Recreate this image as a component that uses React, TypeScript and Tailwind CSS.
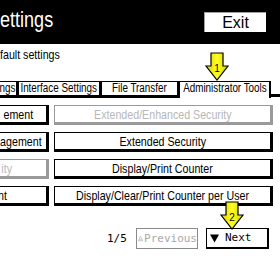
const sans = { fontFamily: '"Liberation Sans", Arial, sans-serif' };
const mono = { fontFamily: '"DejaVu Sans Mono", "Liberation Mono", monospace' };

type Row = {
  left: string;
  leftPad: string;
  leftOff?: boolean;
  right: string;
  rightOff?: boolean;
};

// the panel is cropped on the left, so only the visible tail of each left label is shown
const rows: Row[] = [
  { left: "ement", leftPad: "pr-[13px]", right: "Extended/Enhanced Security", rightOff: true },
  { left: "agement", leftPad: "pr-[4px]", right: "Extended Security" },
  { left: "ity", leftPad: "pr-[34px]", leftOff: true, right: "Display/Print Counter" },
  { left: "nt", leftPad: "pr-[39px]", right: "Display/Clear/Print Counter per User" },
];

// condensed look: Arial squeezed horizontally, like the panel's narrow font
function Narrow({ children, origin = "origin-center" }: { children: React.ReactNode; origin?: string }) {
  return <span className={`inline-block whitespace-nowrap scale-x-[0.82] ${origin}`}>{children}</span>;
}

function Pointer({ n, className }: { n: string; className: string }) {
  return (
    <svg width="24" height="29" viewBox="0 0 24 29" className={className}>
      <defs>
        <linearGradient id={`g${n}`} x1="0" y1="0" x2="1" y2="0">
          <stop offset="0" stopColor="#d8d000" />
          <stop offset="0.5" stopColor="#ffff20" />
          <stop offset="1" stopColor="#d8d000" />
        </linearGradient>
      </defs>
      <polygon
        points="6,1 18,1 18,14 23,14 12,28 1,14 6,14"
        fill={`url(#g${n})`}
        stroke="#000"
        strokeWidth="1.2"
      />
      <text x="12" y="20" textAnchor="middle" fontSize="10" fill="#000" style={sans}>
        {n}
      </text>
    </svg>
  );
}

export default function App() {
  return (
    <div className="relative w-[280px] h-[280px] overflow-hidden bg-white text-black" style={sans}>
      <div className="h-[44px] bg-black flex items-start">
        <div className="mt-[7px] text-[22px] leading-[26px] text-white">
          <Narrow origin="origin-left">ettings</Narrow>
        </div>
        <button className="ml-auto mr-[14px] mt-[12px] w-[62px] h-[20px] bg-white border-t border-l border-[#a0a0a0] text-[16px] leading-[18px]">
          Exit
        </button>
      </div>

      <div className="mt-[3px] text-[13px] leading-[16px]">
        <Narrow origin="origin-left">fault settings</Narrow>
      </div>

      <div className="mt-[18px] flex items-end h-[17px] text-[12px] leading-[13px] whitespace-nowrap">
        <div className="w-[18px] h-[17px] flex justify-end border-t border-r-2 border-b-[3px] border-black pr-[1px]">
          <Narrow origin="origin-right">ngs</Narrow>
        </div>
        <div className="w-[83px] h-[17px] flex justify-center border-t border-l border-r-2 border-b-[3px] border-black">
          <Narrow>Interface Settings</Narrow>
        </div>
        <div className="w-[78px] h-[17px] flex justify-center border-t border-l border-r-2 border-b-[3px] border-black">
          <Narrow>File Transfer</Narrow>
        </div>
        <div className="w-[92px] h-[17px] flex justify-center border-t border-l border-r-2 border-black">
          <Narrow>Administrator Tools</Narrow>
        </div>
        <div className="flex-1 h-[3px] mb-[1px] bg-black" />
      </div>

      <div className="mt-[7px] flex flex-col gap-[7px] text-[13px] leading-[15px] whitespace-nowrap">
        {rows.map((r) => (
          <div key={r.right} className="flex gap-[5px]">
            <div
              className={`w-[49px] h-[20px] flex items-center justify-end border-t border-r-[3px] border-b-[3px] ${r.leftPad} ${
                r.leftOff ? "border-[#9a9a9a] text-[#b8b8b8]" : "border-black"
              }`}
            >
              <Narrow origin="origin-right">{r.left}</Narrow>
            </div>
            <div
              className={`w-[219px] h-[20px] flex items-center justify-center border-t border-l border-r-[3px] border-b-[3px] ${
                r.rightOff ? "border-[#9a9a9a] text-[#b8b8b8]" : "border-black"
              }`}
            >
              <Narrow>{r.right}</Narrow>
            </div>
          </div>
        ))}
      </div>

      <div className="mt-[22px] flex items-center text-[11px] leading-[14px]" style={mono}>
        <span className="ml-[107px] w-[29px]">1/5</span>
        <div className="w-[62px] h-[21px] flex items-center gap-[1px] pl-[1px] border border-[#8a8a8a] text-[#a8a8a8]">
          <svg width="9" height="9" viewBox="0 0 9 9">
            <polygon points="4.5,0.5 8.5,8.5 0.5,8.5" fill="none" stroke="#a0a0a0" strokeWidth="1" />
            <line x1="2.5" y1="6" x2="6.5" y2="6" stroke="#a0a0a0" />
          </svg>
          <span>Previous</span>
        </div>
        <div className="ml-[8px] w-[63px] h-[21px] flex items-center border border-r-2 border-b-2 border-black">
          <svg width="9" height="9" viewBox="0 0 9 9" className="ml-[3px]">
            <polygon points="0,0.5 9,0.5 4.5,8.5" fill="#000" />
          </svg>
          <span className="ml-[6px]">Next</span>
        </div>
      </div>

      <Pointer n="1" className="absolute left-[205px] top-[52px]" />
      <Pointer n="2" className="absolute left-[220px] top-[201px]" />
    </div>
  );
}
